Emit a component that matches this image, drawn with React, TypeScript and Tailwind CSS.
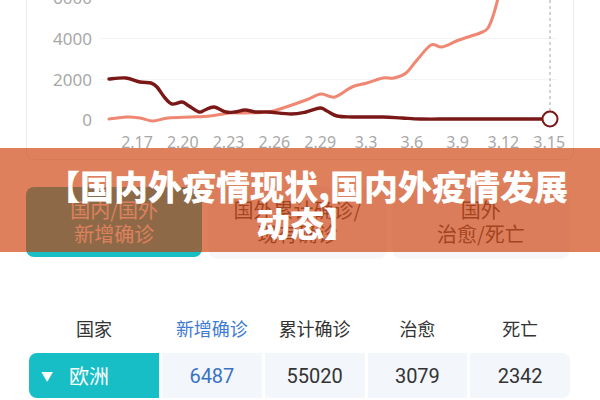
import React from 'react';

type Pt = [number, number];

// Catmull-Rom through the points, emitted as cubic beziers
const smooth = (pts: Pt[]) => {
  let d = `M${pts[0][0]},${pts[0][1]}`;
  for (let i = 0; i < pts.length - 1; i++) {
    const p0 = pts[i - 1] || pts[i];
    const p1 = pts[i];
    const p2 = pts[i + 1];
    const p3 = pts[i + 2] || p2;
    const c1x = p1[0] + (p2[0] - p0[0]) / 6;
    const c1y = p1[1] + (p2[1] - p0[1]) / 6;
    const c2x = p2[0] - (p3[0] - p1[0]) / 6;
    const c2y = p2[1] - (p3[1] - p1[1]) / 6;
    d += ` C${c1x.toFixed(1)},${c1y.toFixed(1)} ${c2x.toFixed(1)},${c2y.toFixed(1)} ${p2[0]},${p2[1]}`;
  }
  return d;
};

const existing: Pt[] = [
  [109, 79], [126, 78], [140, 82], [151, 83], [157, 87], [165, 98], [172, 104],
  [182, 102], [189, 106], [199, 112], [205, 110], [214, 107], [226, 112],
  [235, 112], [245, 110], [256, 112], [268, 112], [291, 114], [306, 112],
  [320, 108], [327, 111], [337, 116], [352, 117], [383, 117], [402, 118],
  [421, 119], [459, 119], [550, 119],
];

const added: Pt[] = [
  [109, 119], [126, 117], [140, 118], [153, 121], [168, 118], [191, 117],
  [210, 116], [230, 113], [245, 113], [268, 112], [283, 108], [306, 100],
  [321, 94], [335, 97], [352, 87], [367, 83], [383, 78], [394, 78], [406, 73],
  [417, 60], [431, 45], [442, 47], [459, 40], [480, 33], [488, 28], [494, 13],
  [499, -6], [502, -20],
];

const yTicks = [
  { v: '6000', y: -3 },
  { v: '4000', y: 38 },
  { v: '2000', y: 79 },
  { v: '0', y: 119 },
];

const dates = ['2.17', '2.20', '2.23', '2.26', '2.29', '3.3', '3.6', '3.9', '3.12', '3.15'];

const TrendChart: React.FC = () => (
  <div className="mx-[26px] h-[160px] rounded-b-lg border-x border-b border-[#ececec] bg-white overflow-hidden">
    <svg width="546" height="159" viewBox="27 0 546 159" className="block">
      <line x1="100" y1="38.5" x2="557" y2="38.5" stroke="#f4f4f4" strokeWidth="1" />
      <line x1="100" y1="79.5" x2="557" y2="79.5" stroke="#f4f4f4" strokeWidth="1" />
      {yTicks.map((t) => (
        <text
          key={t.v}
          x="92"
          y={t.y}
          textAnchor="end"
          dominantBaseline="central"
          fill="#a8a8a8"
          fontSize="17"
          fontFamily="'Noto Sans', sans-serif"
        >
          {t.v}
        </text>
      ))}
      {dates.map((d, i) => (
        <text
          key={d}
          x={137 + i * 45.8}
          y="142"
          textAnchor="middle"
          dominantBaseline="central"
          fill="#a8a8a8"
          fontSize="16"
          fontFamily="'Noto Sans', sans-serif"
        >
          {d}
        </text>
      ))}
      <line x1="550" y1="0" x2="550" y2="111" stroke="#b5b5b5" strokeWidth="1.2" strokeDasharray="3 3" />
      <path d={smooth(added)} fill="none" stroke="#f08773" strokeWidth="3" strokeLinecap="round" />
      <path d={smooth(existing)} fill="none" stroke="#7a1717" strokeWidth="3.4" strokeLinecap="round" />
      <circle cx="550" cy="119" r="7.5" fill="#fff" stroke="#7a1717" strokeWidth="2" />
    </svg>
  </div>
);

const tabs = [
  { lines: ['国内/国外', '新增确诊'], active: true },
  { lines: ['国外累计确诊/', '现有确诊'], active: false },
  { lines: ['国外', '治愈/死亡'], active: false },
];

const columns = ['国家', '新增确诊', '累计确诊', '治愈', '死亡'];

export default function App() {
  return (
    <div
      className="relative h-[400px] w-[600px] overflow-hidden bg-white"
      style={{ fontFamily: "'Noto Sans CJK SC', 'Noto Sans', sans-serif" }}
    >
      <TrendChart />

      <div className="mt-[27px] ml-[26px] mr-[31px] grid grid-cols-3 gap-[7px]">
        {tabs.map((t, i) => (
          <div
            key={i}
            className={
              t.active
                ? 'flex h-[70px] flex-col items-center justify-center rounded-lg bg-[#17bec5] text-[20px] leading-[24px] text-white'
                : 'flex h-[70px] flex-col items-center justify-center rounded-lg bg-[#f6f7f9] text-[20px] leading-[24px] text-[#555] shadow-[0_1px_3px_rgba(0,0,0,0.06)]'
            }
          >
            {t.lines.map((l) => (
              <span key={l}>{l}</span>
            ))}
          </div>
        ))}
      </div>

      <div className="mt-[51px] ml-[29px] mr-[30px] grid h-[40px] grid-cols-[130px_1fr_1fr_1fr_1fr] gap-[3px] text-[18px] text-[#333]">
        {columns.map((c, i) => (
          <div key={c} className={`flex items-center justify-center ${i === 1 ? 'text-[#3f7bd4]' : ''}`}>
            {c}
          </div>
        ))}
      </div>

      <div className="mt-[5px] ml-[29px] mr-[30px] grid h-[45px] grid-cols-[130px_1fr_1fr_1fr_1fr] gap-[3px] text-[20px]">
        <div className="flex items-center gap-[16px] rounded-l-lg bg-[#17bec5] pl-[12px] text-white">
          <span className="text-[12px]">▼</span>
          <span>欧洲</span>
        </div>
        <div className="flex items-center justify-center bg-[#f3f6fa] font-['Roboto'] text-[#3a72c6]">6487</div>
        <div className="flex items-center justify-center bg-[#f3f6fa] font-['Roboto'] text-[#333]">55020</div>
        <div className="flex items-center justify-center bg-[#f3f6fa] font-['Roboto'] text-[#333]">3079</div>
        <div className="flex items-center justify-center rounded-r-lg bg-[#f3f6fa] font-['Roboto'] text-[#333]">2342</div>
      </div>

      {/* title banner laid over the chart and tabs */}
      <div className="absolute left-0 top-[148px] h-[104px] w-full bg-[rgba(205,60,5,0.65)] pt-[19px] pl-[14px] text-center">
        <p className="text-[34px] font-black leading-[37px] text-white">
          【国内外疫情现状,国内外疫情发展
          <br />
          动态】
        </p>
      </div>
    </div>
  );
}
